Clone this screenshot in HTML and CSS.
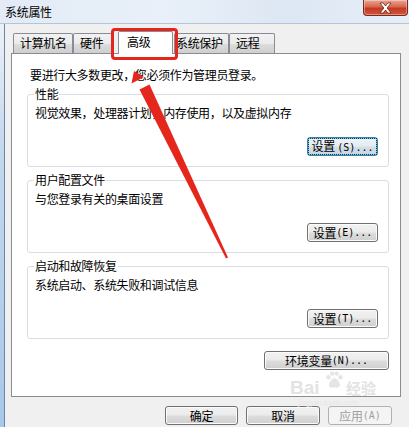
FILE: index.html
```html
<!DOCTYPE html>
<html lang="zh-CN">
<head>
    <meta charset="UTF-8">
    <title>系统属性</title>
    <link rel="stylesheet" href="styles.css">
</head>
<body>
    <div class="window">
        <div class="titlebar">
            <span class="title">系统属性</span>
            <button class="close-btn">
                <svg viewBox="0 0 16 12">
                    <path d="M2.5 1h3.2l2.3 3 2.3-3h3.2l-3.9 5 3.9 5h-3.2l-2.3-3-2.3 3h-3.2l3.9-5z"/>
                </svg>
            </button>
        </div>

        <div class="frame">
            <div class="tabs">
                <div class="tab tab-name">计算机名</div>
                <div class="tab tab-hw">硬件</div>
                <div class="tab tab-adv active">高级<span class="mark"></span></div>
                <div class="tab tab-prot">系统保护</div>
                <div class="tab tab-remote">远程</div>
            </div>

            <div class="panel">
                <p class="notice">要进行大多数更改，您必须作为管理员登录。</p>

                <fieldset class="group">
                    <legend>性能</legend>
                    <p class="desc">视觉效果，处理器计划，内存使用，以及虚拟内存</p>
                    <div class="group-actions">
                        <button class="btn btn-default"><span class="focus">设置 <span class="mn">(S)...</span></span></button>
                    </div>
                </fieldset>

                <fieldset class="group">
                    <legend>用户配置文件</legend>
                    <p class="desc">与您登录有关的桌面设置</p>
                    <div class="group-actions">
                        <button class="btn">设置 <span class="mn">(E)...</span></button>
                    </div>
                </fieldset>

                <fieldset class="group">
                    <legend>启动和故障恢复</legend>
                    <p class="desc">系统启动、系统失败和调试信息</p>
                    <div class="group-actions">
                        <button class="btn">设置 <span class="mn">(T)...</span></button>
                    </div>
                </fieldset>

                <div class="panel-actions">
                    <button class="btn btn-wide">环境变量 <span class="mn">(N)...</span></button>
                </div>
            </div>

            <div class="dialog-actions">
                <button class="btn btn-ok">确定</button>
                <button class="btn btn-cancel">取消</button>
                <button class="btn btn-apply" disabled>应用 <span class="mn">(A)</span></button>
            </div>
        </div>

        <div class="watermark">
            <span class="wm-bai">Bai</span>
            <svg class="wm-paw" viewBox="0 0 24 24">
                <circle cx="6" cy="9" r="2.4"/>
                <circle cx="10" cy="5" r="2.4"/>
                <circle cx="15" cy="5" r="2.4"/>
                <circle cx="19" cy="9" r="2.4"/>
                <path d="M12.5 10c3 0 6 4.5 6 7.5 0 2-1.5 3-3 3-1.2 0-2-.6-3-.6s-1.8.6-3 .6c-1.5 0-3-1-3-3 0-3 3-7.5 6-7.5z"/>
            </svg>
            <span class="wm-jy">经验</span>
            <span class="wm-url">jingyan.baidu.com</span>
        </div>

        <!-- пометка стрелкой поверх окна -->
        <svg class="annotation" viewBox="0 0 409 427">
            <polygon points="134,71 144,77 131.5,83.5"/>
            <polygon points="149.5,84.5 228,257.5 226,258.5 139.5,89.5"/>
        </svg>
    </div>
</body>
</html>
```

FILE: styles.css
```css
* {
    margin: 0;
    padding: 0;
    box-sizing: border-box;
}

body {
    width: 409px;
    height: 427px;
    overflow: hidden;
    background: #f0f0f0;
    font-family: "Noto Sans CJK SC", "Liberation Sans", sans-serif;
    font-size: 12px;
    color: #000;
}

.window {
    position: relative;
    height: 427px;
    display: flex;
    flex-direction: column;
}

.titlebar {
    height: 24px;
    flex: none;
    display: flex;
    align-items: flex-start;
    justify-content: space-between;
    padding-left: 5px;
    background: linear-gradient(90deg, #e2ebf6 0%, #e9f0f9 40%, #dde7f3 70%, #e6eef8 100%);
    border-bottom: 1px solid #b5c5d8;
}

.title {
    line-height: 14px;
    margin-top: 5px;
    letter-spacing: -0.3px;
}

.close-btn {
    width: 45px;
    height: 16px;
    margin-right: 1px;
    border: 1px solid #7a2a1e;
    border-top: none;
    border-radius: 0 0 4px 4px;
    background: linear-gradient(#eba595 0%, #d7664f 45%, #c33a22 55%, #d2553b 100%);
    box-shadow: inset 0 0 0 1px rgba(255,255,255,0.35);
    display: flex;
    align-items: center;
    justify-content: center;
}

.close-btn svg {
    width: 17px;
    height: 12px;
    fill: #fff;
    stroke: #5a1c12;
    stroke-width: 0.7;
}

.frame {
    flex: 1;
    display: flex;
    flex-direction: column;
    padding: 7px 8px 0 7px;
    border-left: 4px solid;
    border-image: linear-gradient(#edf1f6 0%, #c4d8ee 30%, #a8c7ea 100%) 1;
    box-shadow: inset 1px 0 0 #6d86a3;
}

.tabs {
    display: flex;
    align-items: flex-end;
    height: 22px;
    padding-left: 2px;
    position: relative;
    z-index: 1;
}

.tab {
    height: 20px;
    line-height: 18px;
    padding-left: 6px;
    border: 1px solid #898c95;
    border-bottom: none;
    border-radius: 2px 2px 0 0;
    background: linear-gradient(#f2f2f2 0%, #ebebeb 50%, #dddddd 51%, #cfcfcf 100%);
    letter-spacing: -0.35px;
    white-space: nowrap;
}

.tab-name { width: 60px; }
.tab-hw { width: 40px; }
.tab-prot { width: 55px; padding-left: 1px; }
.tab-remote { width: 46px; }

.tab.active {
    position: relative;
    width: 55px;
    height: 23px;
    line-height: 20px;
    margin: 0 1px -1px 5px;
    padding-left: 8px;
    background: #fff;
}

.mark {
    position: absolute;
    left: -8px;
    right: -6px;
    top: -4px;
    bottom: -6px;
    border: 3px solid #e5261c;
    border-radius: 4px;
}

.panel {
    background: #fff;
    border: 1px solid #898c95;
    padding: 14px 11px 26px 15px;
}

.notice {
    line-height: 14px;
    margin-left: 3px;
    letter-spacing: -0.35px;
}

.group {
    border: 1px solid #d5dfe5;
    border-radius: 3px;
    padding: 5px 10px 10px 7px;
    margin-top: 5px;
}

.group + .group {
    margin-top: 6px;
}

.group legend {
    line-height: 14px;
    padding: 0 1px;
    margin-left: -1px;
    letter-spacing: -0.35px;
}

.desc {
    line-height: 14px;
    letter-spacing: -0.35px;
}

.group-actions {
    display: flex;
    justify-content: flex-end;
    margin-top: 17px;
}

.btn {
    height: 19px;
    width: 71px;
    border: 1px solid #707070;
    border-radius: 3px;
    background: linear-gradient(#f2f2f2 0%, #ebebeb 48%, #dddddd 52%, #cfcfcf 100%);
    box-shadow: inset 0 0 0 1px #fbfbfb;
    font-family: inherit;
    font-size: 12px;
    line-height: 16px;
    color: #000;
    letter-spacing: -0.3px;
    display: flex;
    align-items: center;
    justify-content: center;
}

.mn {
    font-family: "DejaVu Sans Mono", monospace;
    font-size: 10px;
    letter-spacing: 0;
}

.btn-default {
    border-color: #3c7fb1;
    background: linear-gradient(#eef4f8 0%, #e3ecf2 48%, #d3dfe8 52%, #c6d5e0 100%);
    box-shadow: inset 0 0 0 1px #5fd3f3;
}

.focus {
    outline: 1px dotted #333;
    outline-offset: 0;
    padding: 0 3px;
    line-height: 13px;
}

.panel-actions {
    display: flex;
    justify-content: flex-end;
    margin-top: 12px;
}

.btn-wide {
    width: 125px;
}

.dialog-actions {
    display: flex;
    justify-content: flex-end;
    gap: 8px;
    margin-top: 9px;
    padding-right: 9px;
}

.btn-ok { width: 73px; }
.btn-cancel { width: 74px; }

.btn-apply {
    width: 64px;
    color: #a0a0a0;
    border-color: #adb2b5;
    background: #f4f4f4;
    box-shadow: none;
}

.watermark {
    position: absolute;
    left: 290px;
    top: 366px;
    width: 90px;
    height: 40px;
    color: #e3e3e3;
    pointer-events: none;
}

.wm-bai {
    position: absolute;
    left: 0;
    top: 12px;
    font-family: "Liberation Sans", sans-serif;
    font-size: 19px;
    font-weight: bold;
    line-height: 20px;
}

.wm-paw {
    position: absolute;
    left: 33px;
    top: 2px;
    width: 22px;
    height: 24px;
    fill: #e5e5e5;
}

.wm-jy {
    position: absolute;
    left: 56px;
    top: 13px;
    font-size: 15px;
    line-height: 18px;
    font-weight: bold;
}

.wm-url {
    position: absolute;
    left: 8px;
    top: 32px;
    font-size: 7px;
    line-height: 8px;
    color: #e6e6e6;
}

.annotation {
    position: absolute;
    left: 0;
    top: 0;
    width: 409px;
    height: 427px;
    fill: #e5261c;
    pointer-events: none;
}
```
